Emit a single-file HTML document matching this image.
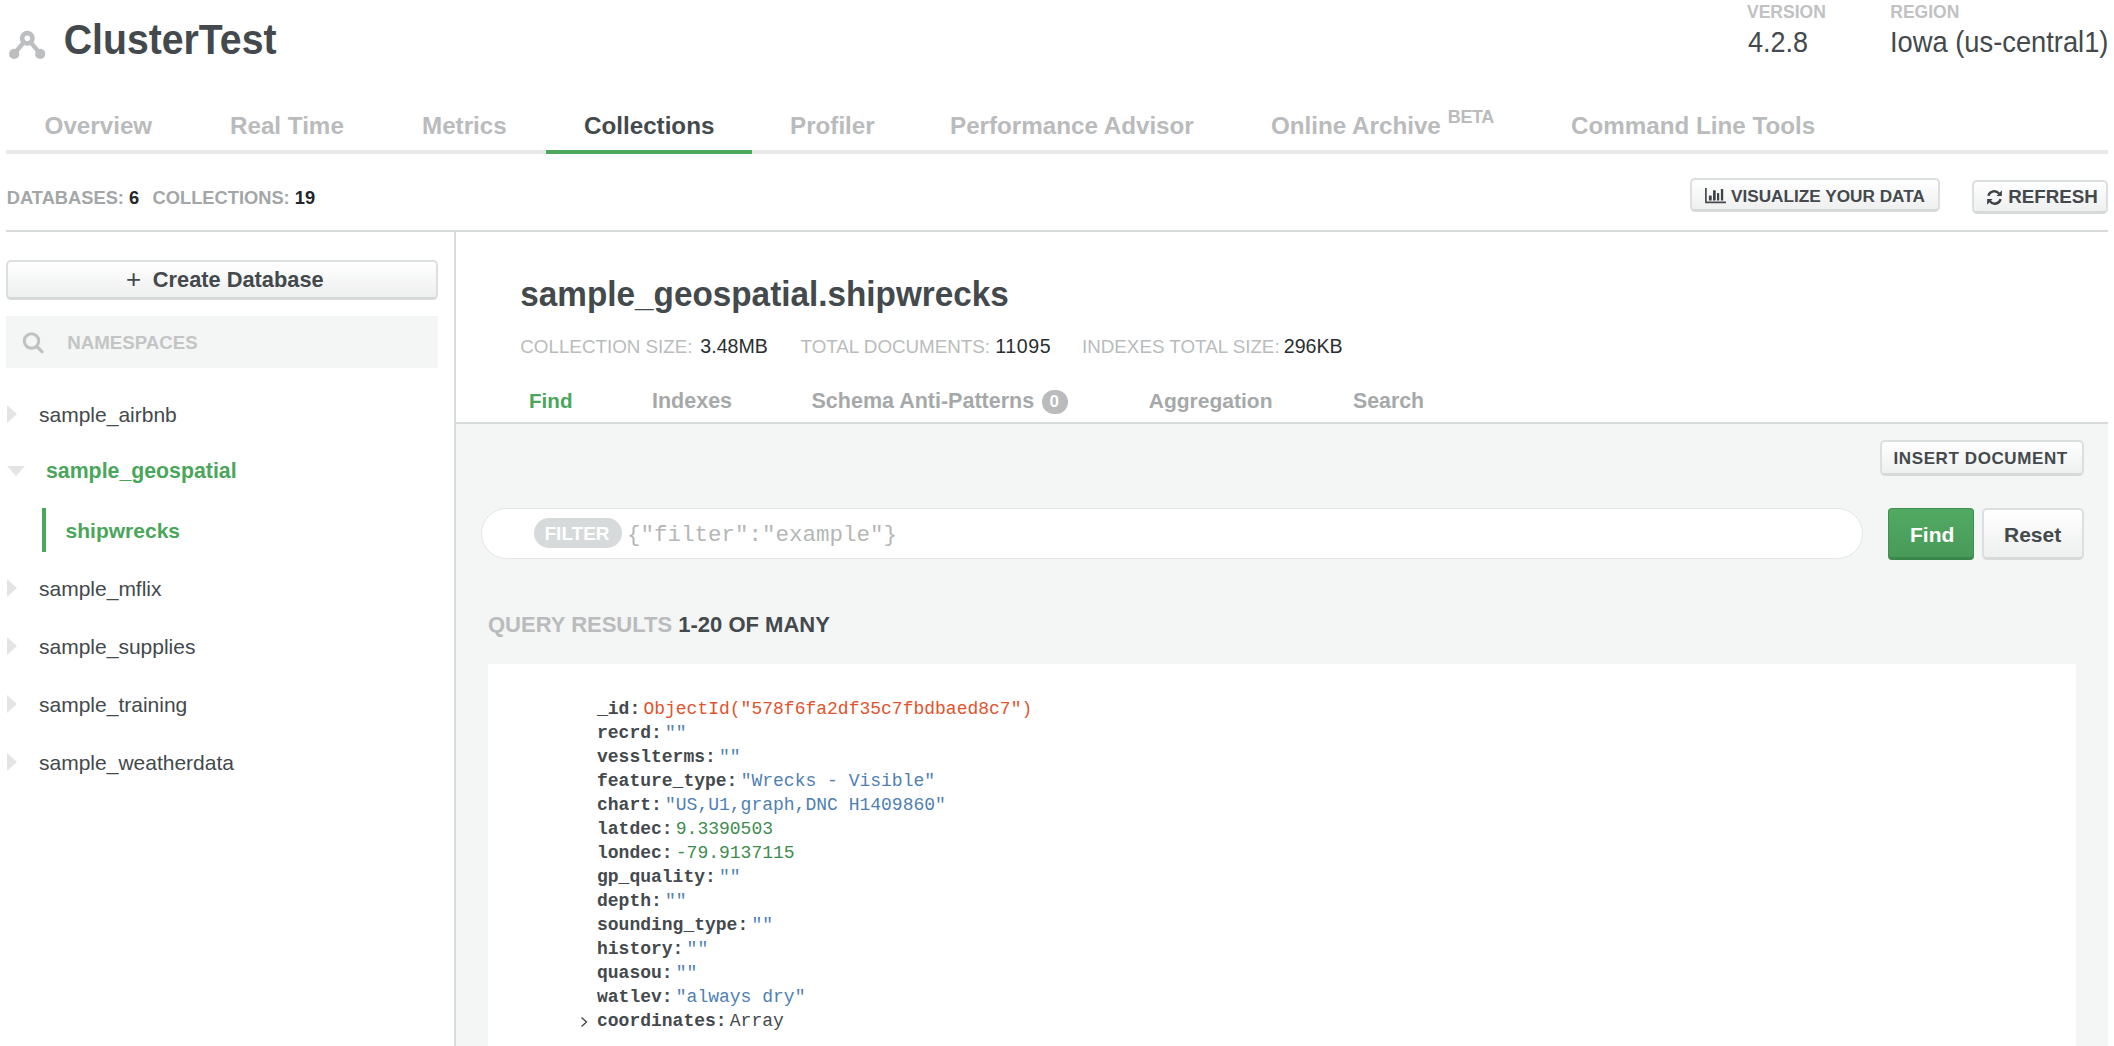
<!DOCTYPE html>
<html>
<head>
<meta charset="utf-8">
<style>
html,body{margin:0;padding:0;background:#fff;}
body{width:2114px;height:1046px;position:relative;overflow:hidden;font-family:"Liberation Sans",sans-serif;}
.t{position:absolute;line-height:1;white-space:pre;font-family:"Liberation Sans",sans-serif;}
.b{font-weight:bold;}
.box{position:absolute;box-sizing:border-box;}
.dark{color:#43494c;}
.tab{font-size:24.2px;font-weight:bold;color:#b9bbbc;top:113.8px;}
.btn{position:absolute;box-sizing:border-box;border:2px solid #dcdfdf;border-bottom:3px solid #d5d9d9;border-radius:5px;background:linear-gradient(#ffffff,#eeefef);}
.tree{font-size:21px;color:#43494c;}
.tri-r{position:absolute;width:0;height:0;border-top:9px solid transparent;border-bottom:9px solid transparent;border-left:10px solid #e3e5e5;}
.mono{position:absolute;font-family:"Liberation Mono",monospace;font-size:18px;line-height:24px;}
.mono div{white-space:pre;height:24px;}
.k{font-weight:bold;color:#43494c;margin-right:3.2px;}
.s{color:#4f80b3;}
.n{color:#3d8c4d;}
.o{color:#e2532d;}
.a{color:#43494c;}
</style>
</head>
<body>
<!-- header -->
<svg class="box" style="left:6px;top:28px" width="42" height="34" viewBox="6 28 42 34">
  <g stroke="#bcbec0" stroke-width="4.4" fill="none" stroke-linecap="round">
    <line x1="27.3" y1="38.2" x2="14.1" y2="53.9"/>
    <line x1="27.3" y1="38.2" x2="40.2" y2="53.9"/>
  </g>
  <circle cx="27.3" cy="38.2" r="5.15" fill="#fff" stroke="#bcbec0" stroke-width="4.7"/>
  <circle cx="14.2" cy="53.9" r="5.1" fill="#bcbec0"/>
  <circle cx="40.2" cy="53.9" r="5.1" fill="#bcbec0"/>
</svg>
<div class="t b dark" style="left:63.8px;top:20.7px;font-size:39.2px;transform:scaleY(1.09);transform-origin:0 85%;">ClusterTest</div>

<div class="t b" style="left:1747px;top:4.4px;font-size:17.5px;color:#bfc1c2;">VERSION</div>
<div class="t b" style="left:1890.3px;top:4.4px;font-size:17.5px;color:#bfc1c2;">REGION</div>
<div class="t dark" style="left:1748px;top:29.9px;font-size:27px;transform:scaleY(1.07);transform-origin:0 85%;">4.2.8</div>
<div class="t dark" style="left:1890px;top:29.4px;font-size:27.3px;transform:scaleY(1.07);transform-origin:0 85%;">Iowa (us-central1)</div>

<!-- tabs -->
<div class="t tab" style="left:44.6px;">Overview</div>
<div class="t tab" style="left:230px;">Real Time</div>
<div class="t tab" style="left:422px;">Metrics</div>
<div class="t tab" style="left:584px;color:#43494c;">Collections</div>
<div class="t tab" style="left:790px;">Profiler</div>
<div class="t tab" style="left:950px;">Performance Advisor</div>
<div class="t tab" style="left:1271px;">Online Archive</div>
<div class="t b" style="left:1447.8px;top:108.3px;font-size:18px;letter-spacing:-0.4px;color:#b9bbbc;">BETA</div>
<div class="t tab" style="left:1571px;">Command Line Tools</div>
<div class="box" style="left:6px;top:150px;width:2102px;height:4px;background:#e7e9e9;"></div>
<div class="box" style="left:546px;top:150px;width:206px;height:4px;background:#4ea95e;"></div>

<!-- db count -->
<div class="t b" style="left:6.8px;top:188.7px;font-size:18.3px;color:#a3a6a7;">DATABASES: <span style="color:#222628">6</span></div>
<div class="t b" style="left:152.6px;top:188.7px;font-size:18.3px;color:#a3a6a7;">COLLECTIONS: <span style="color:#222628">19</span></div>

<div class="btn" style="left:1690px;top:178px;width:250px;height:34px;"></div>
<svg class="box" style="left:1700px;top:182px" width="30" height="26" viewBox="0 0 30 26">
  <path d="M5.9 5.9 V20.4 H26" stroke="#43494c" stroke-width="1.7" fill="none" stroke-linecap="butt" stroke-linejoin="round"/>
  <rect x="8.9" y="13.4" width="2.8" height="5.2" rx="0.6" fill="#3d4346"/>
  <rect x="13" y="8.2" width="2.7" height="10.4" rx="0.6" fill="#3d4346"/>
  <rect x="17" y="11.1" width="2.2" height="7.5" rx="0.6" fill="#3d4346"/>
  <rect x="20.9" y="7" width="2.3" height="11.6" rx="0.6" fill="#3d4346"/>
</svg>
<div class="t b dark" style="left:1731px;top:187.8px;font-size:17.2px;">VISUALIZE YOUR DATA</div>

<div class="btn" style="left:1972px;top:180px;width:136px;height:34px;"></div>
<svg class="box" style="left:1982px;top:185px" width="26" height="25" viewBox="0 0 26 25">
  <path d="M6.4 10.8 A6 6 0 0 1 17 8.6" stroke="#3d4346" stroke-width="2.4" fill="none"/>
  <path d="M19.9 5.3 V10.9 H14.5 Z" fill="#3d4346"/>
  <path d="M18.6 14.1 A6 6 0 0 1 8 16.3" stroke="#3d4346" stroke-width="2.4" fill="none"/>
  <path d="M5.1 19.7 V14.1 H10.5 Z" fill="#3d4346"/>
</svg>
<div class="t b dark" style="left:2008.2px;top:188.3px;font-size:18.8px;">REFRESH</div>

<div class="box" style="left:6px;top:230px;width:2102px;height:2px;background:#d8dbdb;"></div>
<div class="box" style="left:454px;top:230px;width:2px;height:816px;background:#d8dbdb;"></div>

<!-- sidebar -->
<div class="btn" style="left:6px;top:260px;width:432px;height:40px;"></div>
<div class="t dark" style="left:126px;top:266px;font-size:26px;font-weight:normal;">+</div>
<div class="t b dark" style="left:152.8px;top:269.4px;font-size:21.8px;">Create Database</div>

<div class="box" style="left:6px;top:316px;width:432px;height:52px;background:#f4f5f5;"></div>
<svg class="box" style="left:20px;top:330px" width="26" height="26" viewBox="0 0 26 26">
  <circle cx="11.5" cy="11" r="7.2" stroke="#bfc1c2" stroke-width="3" fill="none"/>
  <line x1="16.8" y1="16.5" x2="22" y2="21.7" stroke="#bfc1c2" stroke-width="3.2" stroke-linecap="round"/>
</svg>
<div class="t b" style="left:67.2px;top:334.2px;font-size:18.7px;color:#c3c5c5;">NAMESPACES</div>

<div class="tri-r" style="left:6.5px;top:405px;"></div>
<div class="t tree" style="left:39px;top:403.9px;">sample_airbnb</div>
<div class="box" style="left:6.5px;top:466px;width:0;height:0;border-left:9px solid transparent;border-right:9px solid transparent;border-top:10px solid #e3e5e5;"></div>
<div class="t tree b" style="left:46px;top:460.5px;font-size:21.3px;color:#4aa65a;">sample_geospatial</div>
<div class="box" style="left:42px;top:508px;width:4px;height:44px;background:#4aa65a;"></div>
<div class="t tree b" style="left:65.6px;top:519.7px;color:#4aa65a;">shipwrecks</div>
<div class="tri-r" style="left:6.5px;top:579px;"></div>
<div class="t tree" style="left:39px;top:577.9px;">sample_mflix</div>
<div class="tri-r" style="left:6.5px;top:637px;"></div>
<div class="t tree" style="left:39px;top:635.9px;">sample_supplies</div>
<div class="tri-r" style="left:6.5px;top:695px;"></div>
<div class="t tree" style="left:39px;top:693.9px;">sample_training</div>
<div class="tri-r" style="left:6.5px;top:753px;"></div>
<div class="t tree" style="left:39px;top:751.9px;">sample_weatherdata</div>

<!-- main header -->
<div class="t b dark" style="left:520.3px;top:278.3px;font-size:33.3px;transform:scaleY(1.045);transform-origin:0 85%;">sample_geospatial.shipwrecks</div>
<div class="t" style="left:520.3px;top:337.8px;font-size:18.8px;color:#b9bcbc;">COLLECTION SIZE:</div>
<div class="t" style="left:700.3px;top:337.1px;font-size:19.6px;color:#2a2e30;">3.48MB</div>
<div class="t" style="left:800.5px;top:337.8px;font-size:18.8px;color:#b9bcbc;">TOTAL DOCUMENTS:</div>
<div class="t" style="left:995.3px;top:337.1px;font-size:19.6px;color:#2a2e30;letter-spacing:0.6px;">11095</div>
<div class="t" style="left:1082px;top:337.8px;font-size:18.8px;color:#b9bcbc;">INDEXES TOTAL SIZE:</div>
<div class="t" style="left:1283.8px;top:337.1px;font-size:19.6px;color:#2a2e30;">296KB</div>

<div class="t b" style="left:529px;top:390.8px;font-size:20.6px;color:#4aa65a;">Find</div>
<div class="t b" style="left:652px;top:391.2px;font-size:21.5px;color:#a6a9aa;">Indexes</div>
<div class="t b" style="left:811.5px;top:391.2px;font-size:21.5px;color:#a6a9aa;">Schema Anti-Patterns</div>
<div class="box" style="left:1042px;top:390px;width:26px;height:24px;border-radius:12px;background:#b9bbbc;"></div>
<div class="t b" style="left:1049.5px;top:392.8px;font-size:17px;color:#fff;">0</div>
<div class="t b" style="left:1148.8px;top:389.6px;font-size:21px;color:#a6a9aa;">Aggregation</div>
<div class="t b" style="left:1353px;top:391.2px;font-size:21.3px;color:#a6a9aa;">Search</div>

<div class="box" style="left:456px;top:422px;width:1652px;height:2px;background:#d8dbdb;"></div>
<div class="box" style="left:456px;top:424px;width:1652px;height:622px;background:#f4f5f5;"></div>

<div class="btn" style="left:1880px;top:440px;width:204px;height:36px;"></div>
<div class="t b dark" style="left:1893.5px;top:449.6px;font-size:17px;letter-spacing:0.6px;">INSERT DOCUMENT</div>

<div class="box" style="left:481px;top:508px;width:1382px;height:51px;border-radius:26px;background:#fff;border:1.5px solid #e4e6e6;"></div>
<div class="box" style="left:534px;top:518px;width:88px;height:30px;border-radius:15px;background:#d6dada;"></div>
<div class="t b" style="left:544.5px;top:524px;font-size:19px;color:#fff;">FILTER</div>
<div class="t" style="left:627px;top:523.8px;font-family:'Liberation Mono',monospace;font-size:22.5px;color:#b5b7b7;">{"filter":"example"}</div>

<div class="box" style="left:1888px;top:508px;width:86px;height:52px;border-radius:4px;background:linear-gradient(#52aa62,#489a59);border:1px solid #3f8f4f;border-bottom:3px solid #3b864a;"></div>
<div class="t b" style="left:1910px;top:523.5px;font-size:21px;color:#fff;">Find</div>
<div class="btn" style="left:1982px;top:508px;width:102px;height:52px;"></div>
<div class="t b dark" style="left:2004px;top:523.5px;font-size:21px;">Reset</div>

<div class="t b" style="left:488px;top:613.8px;font-size:22px;color:#b9bbbc;">QUERY RESULTS <span style="color:#43494c">1-20 OF MANY</span></div>

<div class="box" style="left:488px;top:664px;width:1588px;height:400px;background:#fff;"></div>

<div class="mono" style="left:597px;top:696.7px;">
<div><span class="k">_id:</span><span class="o">ObjectId("578f6fa2df35c7fbdbaed8c7")</span></div>
<div><span class="k">recrd:</span><span class="s">""</span></div>
<div><span class="k">vesslterms:</span><span class="s">""</span></div>
<div><span class="k">feature_type:</span><span class="s">"Wrecks - Visible"</span></div>
<div><span class="k">chart:</span><span class="s">"US,U1,graph,DNC H1409860"</span></div>
<div><span class="k">latdec:</span><span class="n">9.3390503</span></div>
<div><span class="k">londec:</span><span class="n">-79.9137115</span></div>
<div><span class="k">gp_quality:</span><span class="s">""</span></div>
<div><span class="k">depth:</span><span class="s">""</span></div>
<div><span class="k">sounding_type:</span><span class="s">""</span></div>
<div><span class="k">history:</span><span class="s">""</span></div>
<div><span class="k">quasou:</span><span class="s">""</span></div>
<div><span class="k">watlev:</span><span class="s">"always dry"</span></div>
<div><span class="k">coordinates:</span><span class="a">Array</span></div>
</div>
<svg class="box" style="left:579px;top:1016px" width="10" height="12" viewBox="0 0 10 12">
  <path d="M2.5 1.5 L7.5 6 L2.5 10.5" stroke="#43494c" stroke-width="1.4" fill="none"/>
</svg>
</body>
</html>
